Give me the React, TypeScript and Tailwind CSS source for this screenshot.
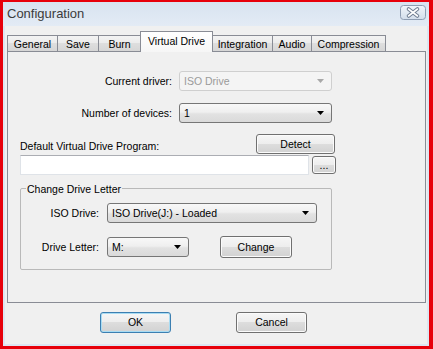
import React from "react";

const Arrow = ({ color }: { color: string }) => (
  <svg width="7" height="4" viewBox="0 0 7 4">
    <path d="M0 0h7L3.5 4z" fill={color} />
  </svg>
);

const Combo = ({
  value,
  width,
  disabled,
}: {
  value: string;
  width: string;
  disabled?: boolean;
}) => (
  <div
    className={`${width} h-[20px] flex items-center rounded-[3px] border pl-[4px] pr-[7px] ${
      disabled
        ? "border-[#cfcfcf] bg-[#f4f4f4] text-[#9a9a9a]"
        : "border-[#767676] bg-[linear-gradient(#f8f8f8_0%,#efefef_45%,#e2e2e2_55%,#dadada_100%)] text-black"
    }`}
  >
    <span className="flex-1 leading-none">{value}</span>
    <Arrow color={disabled ? "#a8a8a8" : "#000"} />
  </div>
);

const Button = ({
  label,
  className,
  focused,
}: {
  label: string;
  className: string;
  focused?: boolean;
}) => (
  <div
    className={`${className} flex items-center justify-center rounded-[3px] border bg-[linear-gradient(#f6f6f6_0%,#ededed_50%,#dddddd_50%,#d2d2d2_100%)] leading-none text-black ${
      focused
        ? "border-[#3c7fb1] shadow-[inset_0_0_0_1px_#a9dcf3]"
        : "border-[#707070] shadow-[inset_0_0_0_1px_#fbfbfb]"
    }`}
  >
    {label}
  </div>
);

const tabs = [
  { name: "General", w: "w-[51px]" },
  { name: "Save", w: "w-[42px]" },
  { name: "Burn", w: "w-[43px]" },
  { name: "Virtual Drive", w: "w-[73px]", active: true },
  { name: "Integration", w: "w-[61px]" },
  { name: "Audio", w: "w-[40px]" },
  { name: "Compression", w: "w-[75px]" },
];

export default function App() {
  return (
    <div className="w-[433px] h-[349px] border-red-600 border-t-2 border-l-[3px] border-r-4 border-b-[3px] bg-[#dde6f1] flex flex-col font-['Liberation_Sans',Arial,sans-serif] text-[10.5px] text-black">
      {/* title bar */}
      <div className="h-[24px] flex items-center justify-between pl-[4px] pr-[3px] bg-[linear-gradient(#d8e3f0,#e3ebf5)]">
        <span className="text-[13px] text-[#3b3b3b] leading-none -mt-[2px]">Configuration</span>
        <svg width="26" height="15" viewBox="0 0 26 15" className="-mt-[4px]">
          <defs>
            <linearGradient id="cb" x1="0" y1="0" x2="0" y2="1">
              <stop offset="0" stopColor="#f1f5fa" />
              <stop offset="1" stopColor="#d3deeb" />
            </linearGradient>
          </defs>
          <rect x="0.5" y="0.5" width="25" height="14" rx="3" fill="url(#cb)" stroke="#8e9db2" />
          <path d="M8.5 4l9 7M17.5 4l-9 7" stroke="#6f7d91" strokeWidth="3.6" strokeLinecap="round" />
          <path d="M8.5 4l9 7M17.5 4l-9 7" stroke="#fff" strokeWidth="1.6" strokeLinecap="round" />
        </svg>
      </div>

      {/* client */}
      <div className="flex-1 mx-[2px] mb-[2px] bg-[#f0f0f0] flex flex-col pt-[5px] pl-[2px] pr-[1px]">
        <div className="h-[20px] flex items-end relative z-10">
          {tabs.map((t, i) =>
            t.active ? (
              <div
                key={t.name}
                className={`${t.w} h-[21px] -mb-px -ml-px flex justify-center pt-[4px] border border-b-0 border-[#898c95] bg-[linear-gradient(#ffffff,#f6f6f6)] leading-none`}
              >
                {t.name}
              </div>
            ) : (
              <div
                key={t.name}
                className={`${t.w} h-[16px] ${i > 0 ? "-ml-px" : ""} flex justify-center pt-[3px] border border-b-0 border-[#898c95] bg-[linear-gradient(#f3f3f3_0%,#ebebeb_50%,#dedede_50%,#d6d6d6_100%)] leading-none`}
              >
                {t.name}
              </div>
            )
          )}
        </div>

        {/* panel */}
        <div className="h-[252px] border border-[#898c95] bg-[#f0f0f0] pl-[12px] flex flex-col">
          <div className="mt-[19px] flex items-center">
            <span className="w-[152px] text-right leading-none">Current driver:</span>
            <div className="ml-[7px]">
              <Combo value="ISO Drive" width="w-[153px]" disabled />
            </div>
          </div>
          <div className="mt-[12px] flex items-center">
            <span className="w-[152px] text-right leading-none">Number of devices:</span>
            <div className="ml-[7px]">
              <Combo value="1" width="w-[153px]" />
            </div>
          </div>
          <div className="mt-[11px] w-[315px] flex items-end justify-between">
            <span className="leading-none mb-[3px]">Default Virtual Drive Program:</span>
            <Button label="Detect" className="w-[79px] h-[20px]" />
          </div>
          <div className="mt-[1px] flex items-center">
            <div className="w-[289px] h-[20px] bg-white border border-[#dfe3e8] border-t-[#abadb3]" />
            <Button label="..." className="ml-[3px] w-[24px] h-[18px]" />
          </div>

          {/* group */}
          <div className="relative mt-[13px] w-[312px] border border-[#b9b9b9] rounded-[2px] pt-[14px] pb-[11px]">
            <span className="absolute -top-[5px] left-[5px] px-[1px] bg-[#f0f0f0] leading-none">
              Change Drive Letter
            </span>
            <div className="flex items-center">
              <span className="w-[78px] text-right leading-none">ISO Drive:</span>
              <div className="ml-[8px]">
                <Combo value="ISO Drive(J:) - Loaded" width="w-[210px]" />
              </div>
            </div>
            <div className="mt-[13px] h-[22px] flex items-center">
              <span className="w-[78px] text-right leading-none">Drive Letter:</span>
              <div className="ml-[8px]">
                <Combo value="M:" width="w-[82px]" />
              </div>
              <Button label="Change" className="ml-[31px] w-[72px] h-[22px]" />
            </div>
          </div>
        </div>

        <div className="mt-[9px] pl-[93px] flex">
          <Button label="OK" className="w-[71px] h-[21px]" focused />
          <Button label="Cancel" className="ml-[65px] w-[71px] h-[21px]" />
        </div>
      </div>
    </div>
  );
}
